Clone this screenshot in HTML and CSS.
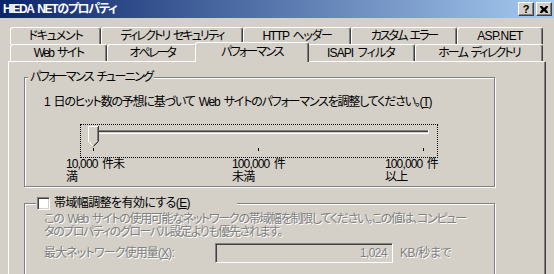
FILE: index.html
```html
<!DOCTYPE html>
<html lang="ja">
<head>
<meta charset="utf-8">
<title>HIEDA NETのプロパティ</title>
<link rel="stylesheet" href="styles.css">
</head>
<body>
<div class="titlebar">
  <span class="title">HIEDA NETのプロパティ</span>
  <div class="tbtns">
    <span class="tbtn help">?</span>
    <span class="tbtn close"><svg width="8" height="7" viewBox="0 0 8 7"><path d="M0 0h2l2 2 2-2h2v1l-2 2.5 2 2.5v1h-2l-2-2-2 2h-2v-1l2-2.5-2-2.5z" fill="#000"/></svg></span>
  </div>
</div>
<div class="tabs">
  <div class="tabrow">
    <div class="tab t-doc">ドキュメント</div>
    <div class="tab t-sec">ディレクトリ セキュリティ</div>
    <div class="tab t-http">HTTP ヘッダー</div>
    <div class="tab t-err">カスタム エラー</div>
    <div class="tab t-asp">ASP.NET</div>
  </div>
  <div class="tabrow">
    <div class="tab t-web">Web サイト</div>
    <div class="tab t-op">オペレータ</div>
    <div class="tab t-perf sel">パフォーマンス</div>
    <div class="tab t-isapi">ISAPI フィルタ</div>
    <div class="tab t-home">ホーム ディレクトリ</div>
  </div>
</div>
<div class="panel">
  <div class="group g1">
    <div class="legend">パフォーマンス チューニング</div>
    <p class="desc">1 日のヒット数の予想に基づいて Web サイトのパフォーマンスを調整してください。(<u>T</u>)</p>
    <div class="slider">
      <svg width="356" height="32" viewBox="0 0 356 32">
        <rect x="9" y="5" width="339" height="4" fill="#fff"/>
        <rect x="9" y="5" width="338" height="3" fill="#808080"/>
        <rect x="10" y="6" width="337" height="1" fill="#404040"/>
        <rect x="10" y="7" width="337" height="1" fill="#d4d0c8"/>
        <rect x="12" y="23" width="1" height="3" fill="#000"/>
        <rect x="177" y="23" width="1" height="3" fill="#000"/>
        <rect x="342" y="23" width="1" height="3" fill="#000"/>
        <g transform="translate(7,1)">
          <polygon points="0,0 11,0 11,16 5.5,21.5 0,16" fill="#d4d0c8"/>
          <polyline points="0.5,16 0.5,0.5 10,0.5" fill="none" stroke="#fff"/>
          <polyline points="0.5,15.5 5,20" fill="none" stroke="#fff"/>
          <polyline points="10.5,0 10.5,15.5 5.5,20.5" fill="none" stroke="#404040"/>
          <polyline points="9.5,1 9.5,15.5 5.5,19.5" fill="none" stroke="#808080"/>
        </g>
      </svg>
    </div>
    <div class="ticklabels">
      <div class="tl tl1">10,000 件未<br>満</div>
      <div class="tl tl2">100,000 件<br>未満</div>
      <div class="tl tl3">100,000 件<br>以上</div>
    </div>
  </div>
  <div class="group g2">
    <div class="legend chklegend"><span class="check"></span><span class="chklabel">帯域幅調整を有効にする(<u>E</u>)</span></div>
    <p class="dis note"><span class="n1">この Web サイトの使用可能なネットワークの帯域幅を制限してください。この値は、コンピュー</span><br><span class="n2">タのプロパティのグローバル設定よりも優先されます。</span></p>
    <div class="limitrow">
      <span class="dis limitlabel">最大ネットワーク使用量(<u>X</u>):</span>
      <span class="edit"><span class="dis editval">1,024</span></span>
      <span class="dis unit">KB/秒まで</span>
    </div>
  </div>
</div>
</body>
</html>
```

FILE: styles.css
```css
html, body {
  margin: 0;
  padding: 0;
}
body {
  width: 554px;
  height: 274px;
  overflow: hidden;
  background: #d4d0c8;
  color: #000;
  font-family: "Liberation Sans", "Noto Sans CJK JP", sans-serif;
  font-size: 12px;
  line-height: 13px;
  font-feature-settings: "palt";
  word-spacing: 2px;
}
u { text-decoration: underline; text-underline-offset: 1px; }

.titlebar {
  height: 18px;
  background: linear-gradient(to right, #0a246a, #a6caf0);
  display: flex;
  align-items: center;
  justify-content: space-between;
  padding: 0 2px 0 3px;
  box-sizing: border-box;
}
.title {
  color: #fff;
  font-weight: bold;
  font-size: 12px;
  letter-spacing: -1.33px;
}
.tbtns {
  display: flex;
  gap: 2px;
}
.tbtn {
  width: 16px;
  height: 14px;
  box-sizing: border-box;
  background: #d4d0c8;
  border: 1px solid;
  border-color: #fff #404040 #404040 #fff;
  box-shadow: inset -1px -1px 0 #808080;
  display: flex;
  align-items: center;
  justify-content: center;
  font-weight: bold;
  font-size: 11px;
  line-height: 11px;
  font-family: "Liberation Sans", sans-serif;
}

.tabs {
  padding: 9px 0 0 10px;
}
.tabrow {
  display: flex;
  height: 17px;
}
.tab {
  height: 17px;
  box-sizing: border-box;
  border-top: 1px solid #fff;
  border-left: 1px solid #fff;
  border-right: 1px solid #404040;
  box-shadow: inset -1px 0 0 #808080;
  border-radius: 3px 3px 0 0;
  display: flex;
  justify-content: center;
  align-items: center;
  padding-top: 1px;
  background: #d4d0c8;
  white-space: nowrap;
}
.t-doc { width: 91px; letter-spacing: -1.2px; }
.t-sec { width: 142px; letter-spacing: -1.87px; }
.t-http { width: 108px; letter-spacing: -1.32px; }
.t-err { width: 106px; letter-spacing: -2.05px; }
.t-asp { width: 86px; letter-spacing: -0.6px; }
.t-web { width: 97px; letter-spacing: -1.6px; }
.t-op { width: 90px; letter-spacing: -2.2px; }
.t-perf { width: 110px; letter-spacing: -1.8px; }
.t-isapi { width: 108px; letter-spacing: -0.9px; }
.t-home { width: 128px; letter-spacing: -1.8px; }
.tab.sel {
  position: relative;
  z-index: 1;
  width: 114px;
  height: 20px;
  margin: -2px -2px -1px;
  align-items: flex-start;
  padding-top: 3px;
}

.panel {
  margin-left: 8px;
  width: 538px;
  height: 213px;
  box-sizing: border-box;
  border-top: 1px solid #fff;
  border-left: 1px solid #fff;
  border-right: 1px solid #404040;
  box-shadow: inset -1px 0 0 #808080;
  padding: 15px 0 0 15px;
}

.group {
  width: 471px;
  box-sizing: border-box;
  border: 1px solid #808080;
  box-shadow: inset 1px 1px 0 #fff, 1px 1px 0 #fff;
}
.g1 { height: 110px; }
.g2 { height: 72px; margin-top: 16px; }

.legend {
  width: fit-content;
  margin: -7px 0 0 3px;
  padding: 0 2px;
  background: #d4d0c8;
  height: 13px;
  letter-spacing: -1.64px;
  white-space: nowrap;
}

.desc {
  margin: 12px 0 0 19px;
  white-space: nowrap;
  letter-spacing: -1.2px;
}

.slider {
  margin: 15px 0 0 55px;
  width: 358px;
  height: 34px;
  box-sizing: border-box;
  border: 1px dotted #000;
}
.slider svg { display: block; }

.ticklabels {
  display: flex;
  margin: 0 0 0 41px;
}
.tl { white-space: nowrap; letter-spacing: -0.87px; }
.tl1 { width: 166px; }
.tl2 { width: 153px; }

.chklegend {
  display: flex;
  align-items: center;
  width: 201px;
  margin-left: 11px;
  padding: 0 0 0 1px;
  box-sizing: border-box;
  letter-spacing: 0;
}
.chklabel { letter-spacing: -0.6px; }
.check {
  width: 13px;
  height: 13px;
  box-sizing: border-box;
  background: #fff;
  border: 1px solid;
  border-color: #808080 #fff #fff #808080;
  box-shadow: inset 1px 1px 0 #404040, inset -1px -1px 0 #d4d0c8;
  margin-right: 4px;
  flex: none;
}

.dis {
  color: #808080;
  text-shadow: 1px 1px 0 #fff;
}
.note {
  margin: 3px 0 0 19px;
  line-height: 13px;
  white-space: nowrap;
}
.n1 { letter-spacing: -1.3px; }
.n2 { letter-spacing: -1.4px; }
.limitrow {
  display: flex;
  align-items: center;
  margin: 4px 0 0 19px;
}
.limitlabel {
  width: 171px;
  flex: none;
  letter-spacing: -0.86px;
}
.edit {
  width: 178px;
  height: 20px;
  box-sizing: border-box;
  border: 1px solid;
  border-color: #808080 #fff #fff #808080;
  box-shadow: inset 1px 1px 0 #404040, inset -1px -1px 0 #d4d0c8;
  display: flex;
  align-items: center;
  justify-content: flex-end;
  padding-right: 5px;
  flex: none;
}
.editval { letter-spacing: -0.6px; }
.unit {
  margin-left: 7px;
  letter-spacing: -0.4px;
}
```
